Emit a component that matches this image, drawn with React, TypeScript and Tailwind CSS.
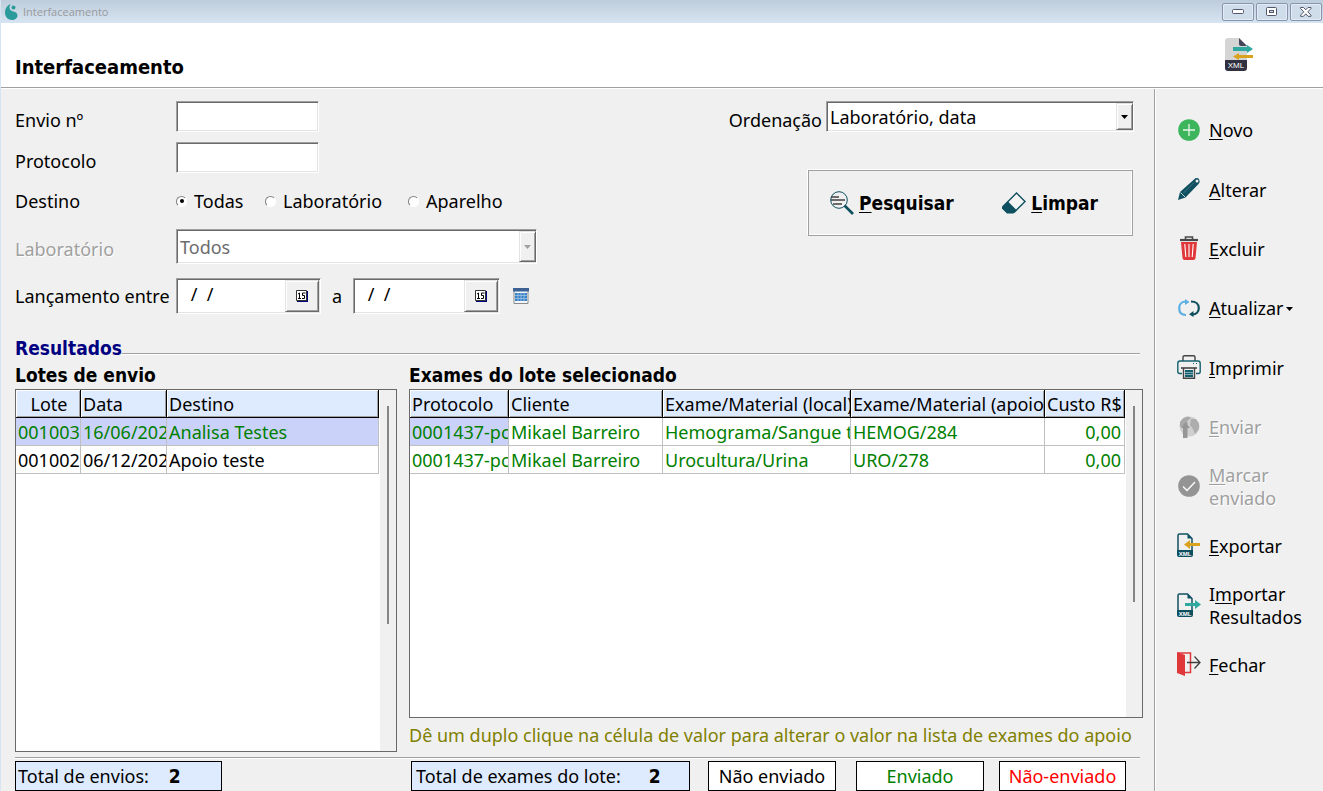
import { ReactNode, useState } from "react";

const sunken =
  "border border-t-[#a0a0a0] border-l-[#a0a0a0] border-r-white border-b-white bg-white shadow-[inset_1px_1px_0_#696969,inset_-1px_-1px_0_#e3e3e3]";
const raised =
  "border border-t-[#e3e3e3] border-l-[#e3e3e3] border-r-[#696969] border-b-[#696969] bg-[#f0f0f0] shadow-[inset_1px_1px_0_#fff,inset_-1px_-1px_0_#a0a0a0]";
const bold = "font-['DejaVu_Sans_Condensed','Noto_Sans',sans-serif] font-bold";

/* Icons */

function AppLogo() {
  return (
    <svg width="14" height="16" viewBox="0 0 14 16">
      <path
        d="M6 0C2 1 0 5 0 8.500C0 13 3 16 7 16C10 16 12.500 14 12.500 11.500C12.500 9 10.500 8 8.500 7.500C6 7 4.500 5.500 4.500 3.500C4.500 2 5 1 6 0Z"
        fill="#2a9a9a"
      />
      <circle cx="8.500" cy="3.500" r="2" fill="#2a9a9a" />
    </svg>
  );
}

function XmlLogo() {
  return (
    <svg width="29" height="33" viewBox="0 0 29 33">
      <path d="M3 0H14L22 8V23H0V3Q0 0 3 0Z" fill="#d5d5d5" />
      <path d="M14 0L22 8H16Q14 8 14 6Z" fill="#454558" />
      <path d="M0 22H22V30Q22 33 19 33H3Q0 33 0 30Z" fill="#303040" />
      <text x="11" y="30" textAnchor="middle" fontSize="8" fill="#fff" fontFamily="Liberation Sans, sans-serif">
        XML
      </text>
      <path d="M8 9H22V7L28 11L22 15V13H8Z" fill="#2fa8a0" />
      <path d="M28 17H14V15L8 18.500L14 22V20H28Z" fill="#d9a31f" />
    </svg>
  );
}

function SearchIcon() {
  return (
    <svg width="24" height="24" viewBox="0 0 24 24" fill="none">
      <circle cx="9" cy="9" r="8.300" stroke="#0f5060" />
      <path d="M1 6H9M1 9H15M3 13H12" stroke="#404040" strokeWidth="1.400" />
      <path d="M14.500 14.500L23 23" stroke="#0f5060" strokeWidth="2.600" />
    </svg>
  );
}

function EraserIcon() {
  return (
    <svg width="24" height="22" viewBox="0 0 24 22">
      <path d="M14.500 1L23 9.500L12.500 20H5L1 16V14.500Z" fill="#f4f4f4" stroke="#0f5060" strokeWidth="1.400" />
      <path d="M6 9.500L14.500 18L11.500 21.500H5L0 16.500V15Z" fill="#0f5060" />
    </svg>
  );
}

function PlusIcon() {
  return (
    <svg width="22" height="22" viewBox="0 0 22 22">
      <circle cx="11" cy="11" r="10.800" fill="#3cb55c" />
      <path d="M11 5V17M5 11H17" stroke="#e6f6ea" strokeWidth="1.300" />
    </svg>
  );
}

function PencilIcon() {
  return (
    <svg width="24" height="24" viewBox="0 0 24 24">
      <path d="M1 23L3 15L17 2.500Q19.500 0 22 2Q23.500 4.500 21.500 7L8.500 20.500Z" fill="#0f5060" />
      <path d="M3.500 15.500L8 20" stroke="#efefef" strokeWidth=".8" />
      <path d="M6.500 16L17 5.500" stroke="#4b8290" strokeWidth=".8" />
      <circle cx="20" cy="4" r="1.500" fill="#efefef" />
    </svg>
  );
}

function TrashIcon() {
  return (
    <svg width="18" height="24" viewBox="0 0 18 24" fill="none">
      <path d="M5.500 3V1H12.500V3" stroke="#484848" strokeWidth="1.600" />
      <path d="M0 4H18" stroke="#484848" strokeWidth="2.200" />
      <path d="M1 6H17L15.500 22Q15.300 24 13.500 24H4.500Q2.700 24 2.500 22Z" fill="#e0373a" />
      <path d="M4.800 8L5.800 21M9 8V21M13.200 8L12.200 21" stroke="#fff" strokeWidth="1.100" />
    </svg>
  );
}

function RefreshIcon() {
  return (
    <svg width="22" height="18" viewBox="0 0 22 18" fill="none" strokeWidth="2.200">
      <path d="M8 16C3 16 1.200 12.500 1.200 9C1.200 5 4 2.500 8 2.500" stroke="#5aaee0" />
      <path d="M7 0L11.500 3L7 6Z" fill="#5aaee0" />
      <path d="M13 2.500C18 2.500 20.800 5.500 20.800 9C20.800 13 18 15.500 14.500 15.500" stroke="#0f4f5c" />
      <path d="M15.500 12L11 15.200L15.500 18Z" fill="#0f4f5c" />
    </svg>
  );
}

function PrinterIcon() {
  return (
    <svg width="24" height="24" viewBox="0 0 24 24" fill="none">
      <path d="M6 6V2Q6 .7 7.500 .7H16.500Q18 .7 18 2V6" stroke="#444" strokeWidth="1.400" />
      <path
        d="M5 18.500H2.500Q.8 18.500 .8 16.500V8.500Q.8 6 3 6H21Q23.200 6 23.200 8.500V16.500Q23.200 18.500 21.500 18.500H19"
        stroke="#15606e"
        strokeWidth="1.400"
      />
      <path d="M4 13H20" stroke="#444" strokeWidth="1.600" />
      <path d="M6.500 13V23.300H17.500V13" stroke="#444" strokeWidth="1.400" />
      <path d="M8 16H16M8 18.500H16M8 21H16" stroke="#15606e" strokeWidth="1.800" />
      <path d="M16 8.500H17M19 8.500H20" stroke="#15606e" />
    </svg>
  );
}

function GlobeIcon() {
  return (
    <svg width="21" height="22" viewBox="0 0 21 22">
      <circle cx="10.500" cy="10.500" r="10" fill="#cfcfcf" />
      <path d="M1 6Q4 1 9 .6L12 2L8 5L9 8L5 10L1 11Z" fill="#a9a9a9" />
      <path d="M12 3L17 3L20 8V13L16 18L14 13L11 9Z" fill="#adadad" />
      <path d="M6.500 6L11 12H8.500V22H4V12H2Z" fill="#969696" />
    </svg>
  );
}

function CheckIcon() {
  return (
    <svg width="22" height="22" viewBox="0 0 22 22" fill="none">
      <circle cx="11" cy="11" r="10.800" fill="#949494" />
      <path d="M5 11.500L9 15.500L17 7" stroke="#fff" strokeWidth="1.300" />
    </svg>
  );
}

function XmlFileIcon({ children }: { children: ReactNode }) {
  return (
    <svg width="24" height="24" viewBox="0 0 24 24" fill="none">
      <path d="M1 17V2.500Q1 1 2.500 1H10.500L15 5.500V17" stroke="#0f5060" strokeWidth="1.500" />
      <path d="M10.500 1V5.500H15Z" fill="#0f5060" />
      <path d="M0 17H16V22Q16 24 14 24H2Q0 24 0 22Z" fill="#0f5060" />
      <text x="8" y="22.500" textAnchor="middle" fontSize="6" fontWeight="700" fill="#fff" fontFamily="Liberation Sans, sans-serif">
        XML
      </text>
      {children}
    </svg>
  );
}

function DoorIcon() {
  return (
    <svg width="24" height="24" viewBox="0 0 24 24" fill="none">
      <path d="M1 1H13.500V20.500H8" stroke="#e0373a" strokeWidth="1.500" />
      <path d="M0 0L8 3V24L0 21Z" fill="#e0373a" />
      <path d="M10 10.500H23M17.500 4.500L23 10.500L17.500 16.500" stroke="#404040" strokeWidth="1.300" />
    </svg>
  );
}

function DayIcon() {
  return (
    <svg width="12" height="12" viewBox="0 0 12 12">
      <path d="M1 1H12V12H1Z" fill="#000080" />
      <path d="M.5 .5H10.500V10.500H.5Z" fill="#fff" stroke="#333" />
      <path d="M2 4L3.500 3V8.500M2 8.500H5M9.500 3H6.500V5.500H8.500V8.500H6" fill="none" stroke="#000" />
    </svg>
  );
}

function CalendarIcon() {
  return (
    <svg width="16" height="16" viewBox="0 0 16 16">
      <path d="M1 1H15V15.500H1Z" fill="#f2f5f9" stroke="#8a8a8a" />
      <path d="M0 0H16V3.500H0Z" fill="#3b6293" />
      <path d="M2 5H14V13H2Z" fill="#3c83c8" />
      <path d="M2 7.500H14M2 10.500H14M5 5V13M8 5V13M11 5V13" stroke="#a9cbea" strokeWidth=".7" />
    </svg>
  );
}

function Caret({ color = "#000" }: { color?: string }) {
  return (
    <svg width="7" height="4" viewBox="0 0 7 4">
      <path d="M0 0H7L3.500 4Z" fill={color} />
    </svg>
  );
}

/* Controls */

function SelectBox({ id, value, disabled, className }: { id: string; value: string; disabled?: boolean; className: string }) {
  return (
    <div className={`relative p-px ${sunken} ${className}`}>
      <select
        id={id}
        disabled={disabled}
        className="h-full w-full appearance-none pr-5 pl-0.5 outline-none disabled:text-[#6d6d6d] disabled:opacity-100"
      >
        <option>{value}</option>
      </select>
      <span className={`pointer-events-none absolute inset-y-px right-0 flex w-[17px] items-center justify-center ${raised}`}>
        <Caret color={disabled ? "#a0a0a0" : "#000"} />
      </span>
    </div>
  );
}

function DateBox({ label, className }: { label: string; className: string }) {
  return (
    <div className={`flex h-9 p-px ${sunken} ${className}`}>
      <input aria-label={label} defaultValue=" /  /" className="w-full min-w-0 bg-transparent pb-1 pl-2 outline-none" />
      <button aria-label="Abrir calendário" className={`flex w-[34px] shrink-0 items-center justify-center ${raised}`}>
        <DayIcon />
      </button>
    </div>
  );
}

interface Column {
  title: string;
  width: string;
  align?: string;
}

interface GridProps {
  columns: Column[];
  rows: string[][];
  rowClass: (row: number) => string;
  cellClass?: (row: number, col: number) => string;
  width: string;
  thumb: string;
}

function Grid({ columns, rows, rowClass, cellClass, width, thumb }: GridProps) {
  return (
    <div className="flex flex-1 border border-[#696969] bg-white">
      <div className="min-w-0 flex-1 overflow-hidden">
        <table className={`table-fixed border-separate border-spacing-0 ${width}`}>
          <thead>
            <tr>
              {columns.map((column) => (
                <th
                  key={column.title}
                  className={`h-7 overflow-hidden border-r border-b border-black bg-[#deebff] p-0 pl-0.5 font-normal whitespace-nowrap shadow-[inset_1px_1px_0_#fff,inset_-1px_-1px_0_#a0a0a0] ${column.width} ${column.title === "Lote" ? "text-center" : "text-left"}`}
                >
                  {column.title}
                </th>
              ))}
            </tr>
          </thead>
          <tbody>
            {rows.map((cells, row) => (
              <tr key={row} className={rowClass(row)}>
                {cells.map((cell, col) => (
                  <td
                    key={col}
                    className={`h-7 overflow-hidden border-r border-b border-[#c0c0c0] p-0 pl-0.5 whitespace-nowrap ${columns[col].align ?? ""} ${cellClass?.(row, col) ?? ""}`}
                  >
                    {cell}
                  </td>
                ))}
              </tr>
            ))}
          </tbody>
        </table>
      </div>
      <div className="flex w-4 justify-center bg-[#f0f0f0] pt-4">
        <div className={`w-0.5 bg-[#868686] ${thumb}`} />
      </div>
    </div>
  );
}

interface ActionProps {
  icon: ReactNode;
  children: ReactNode;
  disabled?: boolean;
}

function Action({ icon, children, disabled }: ActionProps) {
  return (
    <button
      disabled={disabled}
      className="flex items-center gap-2 pl-5 text-left leading-[23px] disabled:text-[#a0a0a0] disabled:[text-shadow:1px_1px_0_#fff]"
    >
      <span className="flex w-6 shrink-0 justify-center pb-0.5">{icon}</span>
      <span>{children}</span>
    </button>
  );
}

function Key({ children }: { children: string }) {
  return <span className="underline decoration-1 underline-offset-2">{children}</span>;
}

const batchColumns: Column[] = [
  { title: "Lote", width: "w-[65px]" },
  { title: "Data", width: "w-[86px]" },
  { title: "Destino", width: "w-[212px]" },
];

const batches = [
  ["001003", "16/06/202", "Analisa Testes"],
  ["001002", "06/12/202", "Apoio teste"],
];

const examColumns: Column[] = [
  { title: "Protocolo", width: "w-[99px]" },
  { title: "Cliente", width: "w-[154px]" },
  { title: "Exame/Material (local)", width: "w-[188px]" },
  { title: "Exame/Material (apoio)", width: "w-[194px]" },
  { title: "Custo R$", width: "w-[80px]", align: "text-right pr-[3px]" },
];

const exams = [
  ["0001437-pc", "Mikael Barreiro", "Hemograma/Sangue t", "HEMOG/284", "0,00"],
  ["0001437-pc", "Mikael Barreiro", "Urocultura/Urina", "URO/278", "0,00"],
];

const targets = [
  { name: "Todas", width: "w-[89px]" },
  { name: "Laboratório", width: "w-[143px]" },
  { name: "Aparelho", width: "w-auto" },
];

const windowButton =
  "flex h-[18px] w-8 items-center justify-center rounded-xs border border-[#8794ac] bg-[#cfdcea] shadow-[inset_0_0_0_1px_#e3ecf6]";

export default function App() {
  const [target, setTarget] = useState("Todas");

  return (
    <div className="flex min-h-screen flex-col border-l border-[#d7e4f2] bg-[#f0f0f0] font-['Noto_Sans',sans-serif] text-[18px] leading-6 text-black">
      {/* Title bar */}
      <div className="flex h-[23px] items-center justify-between bg-linear-to-b from-[#becddb] to-[#d7e4f2] pr-px pl-1">
        <div className="flex items-center gap-1 font-['Open_Sans',sans-serif] text-[11px] text-[#98999c]">
          <AppLogo />
          <span>Interfaceamento</span>
        </div>
        <div className="flex gap-0.5">
          <button aria-label="Minimizar" className={windowButton}>
            <svg width="12" height="6" viewBox="0 0 12 6">
              <rect x=".5" y=".5" width="11" height="4" rx="1" fill="#fff" stroke="#52566b" />
            </svg>
          </button>
          <button aria-label="Maximizar" className={windowButton}>
            <svg width="12" height="10" viewBox="0 0 12 10">
              <rect x=".5" y=".5" width="10" height="8" rx="1" fill="#fff" stroke="#52566b" />
              <rect x="3.500" y="3.500" width="4" height="2" fill="#cfdcea" stroke="#52566b" />
            </svg>
          </button>
          <button aria-label="Fechar janela" className={windowButton}>
            <svg width="12" height="10" viewBox="0 0 12 10">
              <path
                d="M.5 .5H3.500L5.800 2.800L8 .5H11V1.500L7.800 4.800L11 8.200V9.300H8L5.800 6.800L3.500 9.300H.5V8.200L3.800 4.800L.5 1.500Z"
                fill="#fff"
                stroke="#52566b"
              />
            </svg>
          </button>
        </div>
      </div>

      {/* Header */}
      <header className="flex h-[65px] items-end justify-between border-b border-[#a0a0a0] bg-white pr-[69px] pb-2 pl-3.5">
        <h1 className={`text-[20px] ${bold}`}>Interfaceamento</h1>
        <div className="pb-2">
          <XmlLogo />
        </div>
      </header>

      <div className="flex flex-1 border-t border-white">
        <main className="flex min-w-0 flex-1 flex-col pt-3 pl-3.5">
          {/* Filters */}
          <div className="flex items-start justify-between pr-5">
            <div className="grid grid-cols-[161px_auto] items-center gap-y-2.5">
              <label htmlFor="envio" className="pt-[7px]">Envio nº</label>
              <input id="envio" className={`h-[31px] w-[143px] px-1 outline-none ${sunken}`} />

              <label htmlFor="protocolo" className="pt-[7px]">Protocolo</label>
              <input id="protocolo" className={`h-[31px] w-[143px] px-1 outline-none ${sunken}`} />

              <span id="destino">Destino</span>
              <div role="radiogroup" aria-labelledby="destino" className="flex h-9 items-center">
                {targets.map(({ name, width }) => (
                  <label key={name} className={`flex items-center gap-[7px] ${width}`}>
                    <input
                      type="radio"
                      name="destino"
                      checked={target === name}
                      onChange={() => setTarget(name)}
                      className="flex size-[11px] shrink-0 appearance-none items-center justify-center rounded-full border border-t-[#808080] border-r-white border-b-white border-l-[#808080] bg-white before:size-1 before:rounded-full checked:before:bg-black"
                    />
                    {name}
                  </label>
                ))}
              </div>

              <label htmlFor="laboratorio" className="text-[#a0a0a0] [text-shadow:1px_1px_0_#fff]">Laboratório</label>
              <div className="h-[39px]">
                <SelectBox id="laboratorio" value="Todos" disabled className="h-[35px] w-[361px]" />
              </div>

              <span>Lançamento entre</span>
              <div className="flex items-center">
                <DateBox label="Lançamento de" className="w-[145px]" />
                <span className="w-8 text-center">a</span>
                <DateBox label="Lançamento até" className="w-[147px]" />
                <button aria-label="Escolher período" className="ml-[13px]">
                  <CalendarIcon />
                </button>
              </div>
            </div>

            <div className="flex flex-col items-end gap-[38px]">
              <div className="flex items-start gap-1">
                <label htmlFor="ordenacao" className="pt-[7px]">Ordenação</label>
                <SelectBox id="ordenacao" value="Laboratório, data" className="h-[31px] w-[308px]" />
              </div>
              <div className="mr-px flex h-[66px] w-[325px] items-center justify-between border border-[#a0a0a0] pr-[34px] pl-[21px] text-[19px] shadow-[inset_-1px_-1px_0_#fff,-1px_-1px_0_#fff]">
                <button className={`flex items-center gap-[5px] ${bold}`}>
                  <SearchIcon />
                  <span><Key>P</Key>esquisar</span>
                </button>
                <button className={`flex items-center gap-[5px] ${bold}`}>
                  <EraserIcon />
                  <span><Key>L</Key>impar</span>
                </button>
              </div>
            </div>
          </div>

          {/* Results */}
          <div className="mt-[22px] flex items-center pr-3.5 text-[19px]">
            <h2 className={`text-[#000080] ${bold}`}>Resultados</h2>
            <div className="mt-3 h-0.5 flex-1 border-t border-[#a0a0a0] bg-white" />
          </div>

          <div className="flex flex-1 gap-3 pt-[3px] pr-[11px] pb-[5px]">
            <section className="flex w-[382px] flex-col">
              <h3 className={`h-[26px] text-[19px] ${bold}`}>Lotes de envio</h3>
              <Grid
                columns={batchColumns}
                rows={batches}
                rowClass={(row) => (row === 0 ? "bg-[#cbd2f9] text-[#008000]" : "")}
                width="w-[363px]"
                thumb="h-[218px]"
              />
            </section>
            <section className="flex min-w-0 flex-1 flex-col">
              <h3 className={`h-[26px] text-[19px] ${bold}`}>Exames do lote selecionado</h3>
              <Grid
                columns={examColumns}
                rows={exams}
                rowClass={() => "text-[#008000]"}
                cellClass={(row, col) => (row === 0 && col === 0 ? "bg-[#cbd2f9]" : "")}
                width="w-[715px]"
                thumb="h-[196px]"
              />
              <p className="h-[34px] pt-[5px] whitespace-nowrap text-[#808000]">
                Dê um duplo clique na célula de valor para alterar o valor na lista de exames do apoio
              </p>
            </section>
          </div>

          {/* Totals */}
          <footer className="mr-3.5 flex border-t border-[#a0a0a0] pt-[3px] shadow-[inset_0_1px_0_#fff]">
            <div className="flex h-[30px] w-[207px] items-center gap-5 border border-black bg-[#deebff] pl-0.5">
              <span>Total de envios:</span>
              <b className={`text-[19px] ${bold}`}>2</b>
            </div>
            <div className="ml-[189px] flex h-[30px] w-[279px] items-center gap-7 border border-black bg-[#deebff] pl-1">
              <span>Total de exames do lote:</span>
              <b className={`text-[19px] ${bold}`}>2</b>
            </div>
            <div className="ml-[18px] flex h-[30px] w-32 items-center justify-center border border-black bg-white">Não enviado</div>
            <div className="ml-5 flex h-[30px] w-32 items-center justify-center border border-black bg-white text-[#008000]">Enviado</div>
            <div className="ml-[15px] flex h-[30px] w-[127px] items-center justify-center border border-black bg-white text-[#ff0000]">Não-enviado</div>
          </footer>
        </main>

        {/* Actions */}
        <aside className="w-[169px] shrink-0 border-l border-[#a0a0a0] pt-3 shadow-[inset_1px_0_0_#fff]">
          <div className="grid h-[594px] grid-rows-10 pl-0.5">
            <Action icon={<PlusIcon />}><Key>N</Key>ovo</Action>
            <Action icon={<PencilIcon />}><Key>A</Key>lterar</Action>
            <Action icon={<TrashIcon />}><Key>E</Key>xcluir</Action>
            <Action icon={<RefreshIcon />}>
              <span className="flex items-center gap-0.5">
                <span><Key>A</Key>tualizar</span>
                <Caret />
              </span>
            </Action>
            <Action icon={<PrinterIcon />}><Key>I</Key>mprimir</Action>
            <Action icon={<GlobeIcon />} disabled><Key>E</Key>nviar</Action>
            <Action icon={<CheckIcon />} disabled><Key>M</Key>arcar<br />enviado</Action>
            <Action
              icon={
                <XmlFileIcon>
                  <path d="M23 10H13V7L7 11.500L13 16V13H23Z" fill="#d9a31f" />
                </XmlFileIcon>
              }
            >
              <Key>E</Key>xportar
            </Action>
            <Action
              icon={
                <XmlFileIcon>
                  <path d="M8 10H18V7L24 11.500L18 16V13H8Z" fill="#2fa8a0" />
                </XmlFileIcon>
              }
            >
              I<Key>m</Key>portar<br />Resultados
            </Action>
            <Action icon={<DoorIcon />}><Key>F</Key>echar</Action>
          </div>
        </aside>
      </div>
    </div>
  );
}
